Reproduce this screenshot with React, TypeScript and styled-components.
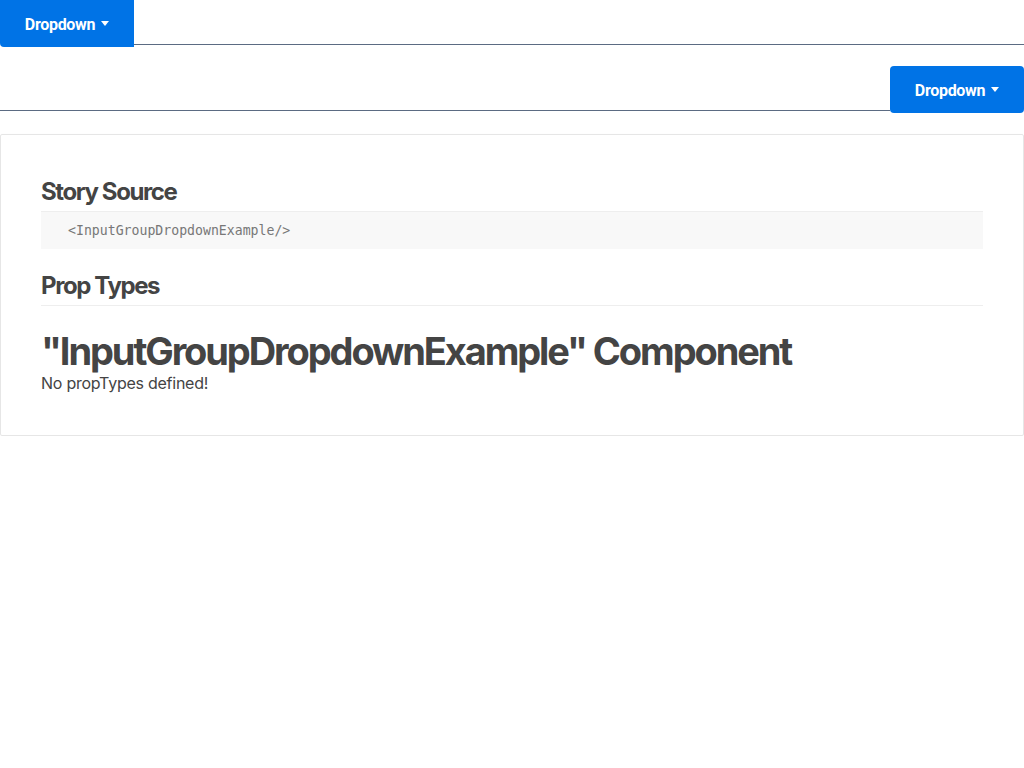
import React from "react";
import styled, { createGlobalStyle } from "styled-components";

const Global = createGlobalStyle`
  html, body { margin: 0; padding: 0; background: #fff; }
  body { font-family: Inter, "Open Sans", sans-serif; color: #444; }
  * { box-sizing: border-box; }
`;

const Page = styled.div`
  display: flex;
  flex-direction: column;
`;

const Group = styled.div<{ $mt?: number }>`
  display: flex;
  align-items: flex-start;
  margin-top: ${(p) => p.$mt ?? 0}px;
`;

const Input = styled.div`
  flex: 1;
  height: 45px;
  border-bottom: 1px solid #5b6b82;
`;

const Button = styled.button<{ $side: "left" | "right" }>`
  display: flex;
  align-items: center;
  justify-content: center;
  gap: 6px;
  width: 134px;
  height: 47px;
  border: none;
  background: #0073e6;
  color: #fff;
  font-family: Roboto, "Liberation Sans", sans-serif;
  font-weight: 700;
  font-size: 16px;
  letter-spacing: -0.3px;
  padding: 2px 0 0;
  border-radius: ${(p) => (p.$side === "left" ? "0 0 0 4px" : "4px")};
`;

const Caret = styled.span`
  width: 0;
  height: 0;
  border-left: 4.5px solid transparent;
  border-right: 4.5px solid transparent;
  border-top: 5px solid #fff;
  margin-top: -2px;
`;

const Card = styled.div`
  margin-top: 21px;
  border: 1px solid #e6e6e6;
  border-radius: 2px;
  box-shadow: 0 1px 3px rgba(0, 0, 0, 0.05);
  padding: 40px 40px 43px;
`;

const H2 = styled.h2`
  margin: 0;
  font-family: Inter, sans-serif;
  font-weight: 700;
  font-size: 24px;
  letter-spacing: -1.4px;
  color: #444;
  line-height: 34px;
  padding-bottom: 2px;
  border-bottom: 1px solid #eee;
`;

const Code = styled.pre`
  margin: 0 0 20px;
  background: #f8f8f8;
  padding: 10px 27px;
  font-family: "DejaVu Sans Mono", monospace;
  font-size: 13.2px;
  line-height: 17px;
  color: #777;
`;

const H1 = styled.h1`
  margin: 22px 0 0;
  font-family: Inter, sans-serif;
  font-weight: 700;
  font-size: 38px;
  letter-spacing: -2.1px;
  line-height: 46px;
  color: #444;
`;

const Para = styled.p`
  margin: 0;
  font-family: Inter, sans-serif;
  font-size: 16px;
  letter-spacing: -0.25px;
  line-height: 18px;
  color: #444;
`;

export default function App() {
  return (
    <Page>
      <Global />
      <Group>
        <Button $side="left">
          Dropdown <Caret />
        </Button>
        <Input />
      </Group>
      <Group $mt={19}>
        <Input />
        <Button $side="right">
          Dropdown <Caret />
        </Button>
      </Group>
      <Card>
        <H2>Story Source</H2>
        <Code>{"<InputGroupDropdownExample/>"}</Code>
        <H2>Prop Types</H2>
        <H1>"InputGroupDropdownExample" Component</H1>
        <Para>No propTypes defined!</Para>
      </Card>
    </Page>
  );
}
